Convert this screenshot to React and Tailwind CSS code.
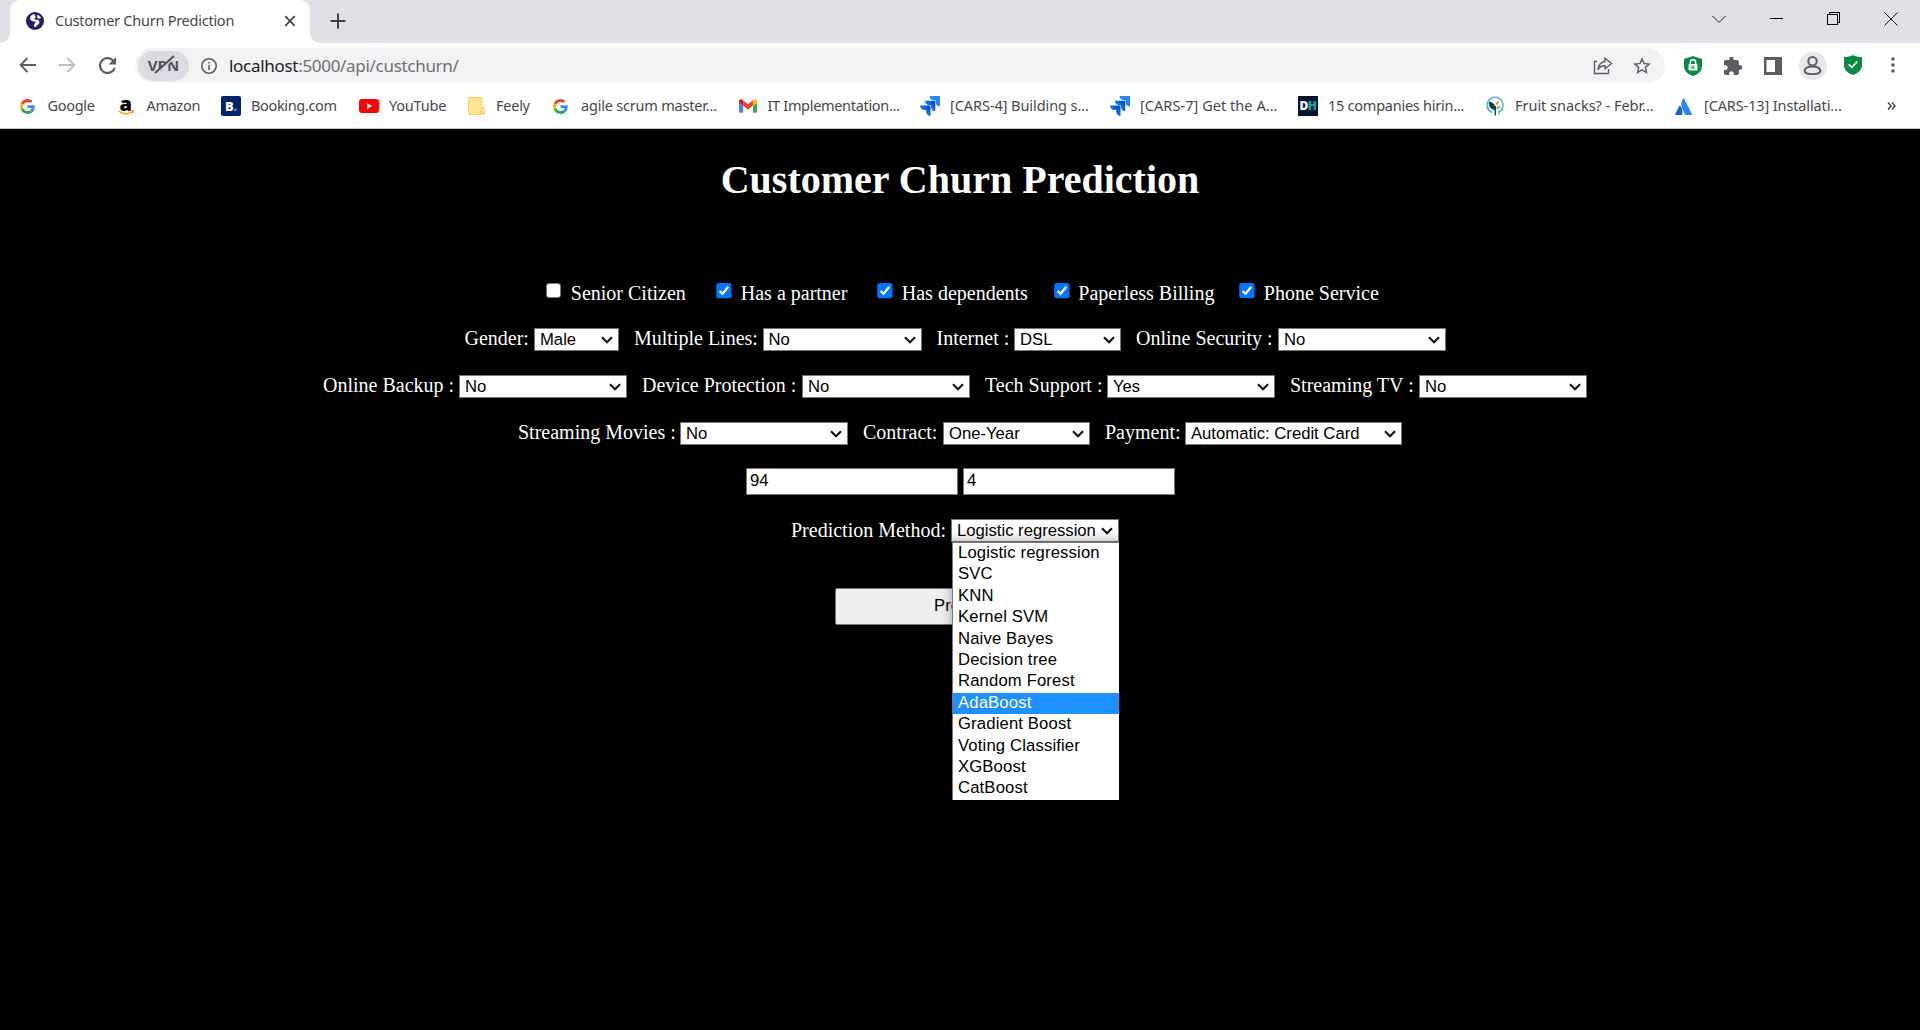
import React from 'react';

const G = () => (
  <svg viewBox="0 0 48 48" className="mt-px h-[15px] w-[15px]">
    <path fill="#EA4335" d="M24 9.5c3.54 0 6.71 1.22 9.21 3.6l6.85-6.85C35.9 2.38 30.47 0 24 0 14.62 0 6.51 5.38 2.56 13.22l7.98 6.19C12.43 13.72 17.74 9.5 24 9.5z" />
    <path fill="#4285F4" d="M46.98 24.55c0-1.57-.15-3.09-.38-4.55H24v9.02h12.94c-.58 2.96-2.26 5.48-4.78 7.18l7.73 6c4.51-4.18 7.09-10.36 7.09-17.65z" />
    <path fill="#FBBC05" d="M10.53 28.59c-.48-1.45-.76-2.99-.76-4.59s.27-3.14.76-4.59l-7.98-6.19C.92 16.46 0 20.12 0 24c0 3.88.92 7.54 2.56 10.78l7.97-6.19z" />
    <path fill="#34A853" d="M24 48c6.48 0 11.93-2.13 15.89-5.81l-7.73-6c-2.15 1.45-4.92 2.3-8.16 2.3-6.26 0-11.57-4.22-13.47-9.91l-7.98 6.19C6.51 42.62 14.62 48 24 48z" />
  </svg>
);

const Amazon = () => (
  <span className="-ml-px flex w-[17px] flex-col items-center">
    <span className="font-['Open_Sans',sans-serif] text-[20px] leading-[13px] font-extrabold text-black">a</span>
    <svg viewBox="0 0 16 5" className="h-[5px] w-4" fill="none" stroke="#ff9900" strokeWidth="1.5">
      <path d="M.5 1Q7.5 6 13.5 2M12 .8l3-.2-.8 2.6" />
    </svg>
  </span>
);

const Booking = () => (
  <span className="flex h-5 w-5 items-center justify-center rounded-[2px] bg-[#00246b] font-['Open_Sans',sans-serif] text-[13px] leading-none font-extrabold text-white">
    B<span className="text-[#27b5f8]">.</span>
  </span>
);

const YouTube = () => (
  <svg viewBox="0 0 20 14" className="h-[14px] w-5">
    <rect width="20" height="14" rx="3" fill="#f00" />
    <path d="M8 4l5.2 3L8 10z" fill="#fff" />
  </svg>
);

const Folder = () => (
  <svg viewBox="0 0 17 18" className="h-[18px] w-[17px]">
    <path d="M.5.5H14V11h2v6.5H.5z" fill="#ffe591" stroke="#f6d368" />
    <path d="M13.5 10.5H16v6.5h-4v-3h1.500z" fill="#ffe591" stroke="#f3c74d" strokeWidth=".8" />
  </svg>
);

const Gmail = () => (
  <svg viewBox="52 42 88 66" className="h-[14px] w-[18px]">
    <path fill="#4285f4" d="M58 108h14V74L52 59v43c0 3.320 2.690 6 6 6" />
    <path fill="#34a853" d="M120 108h14c3.320 0 6-2.690 6-6V59l-20 15" />
    <path fill="#fbbc04" d="M120 48v26l20-15v-8c0-7.420-8.470-11.650-14.400-7.200" />
    <path fill="#ea4335" d="M72 74V48l24 18 24-18v26L96 92" />
    <path fill="#c5221f" d="M52 51v8l20 15V48l-5.600-4.200c-5.940-4.450-14.400-.22-14.400 7.200" />
  </svg>
);

const Jira = () => (
  <svg viewBox="0 0 24 24" className="h-5 w-5">
    <defs>
      <linearGradient id="jiraShade" x1="1" y1="0" x2="0" y2="1">
        <stop offset=".2" stopColor="#0052cc" />
        <stop offset=".65" stopColor="#2684ff" />
      </linearGradient>
    </defs>
    <path fill="url(#jiraShade)" d="M11.571 11.513H0a5.218 5.218 0 0 0 5.232 5.215h2.130v2.057A5.215 5.215 0 0 0 12.575 24V12.518a1.005 1.005 0 0 0-1.005-1.005z" />
    <path fill="url(#jiraShade)" d="M17.294 5.757H5.736a5.215 5.215 0 0 0 5.215 5.214h2.129v2.058a5.218 5.218 0 0 0 5.215 5.214V6.758a1.001 1.001 0 0 0-1.001-1.001z" />
    <path fill="#2684ff" d="M23.013 0H11.455a5.215 5.215 0 0 0 5.215 5.215h2.129v2.057A5.215 5.215 0 0 0 24 12.483V1.005A1.001 1.001 0 0 0 23.013 0z" />
  </svg>
);

const DH = () => (
  <span className="flex h-5 w-5 items-center justify-center bg-[#04152d] font-['Open_Sans',sans-serif] text-[12px] leading-none font-extrabold tracking-[-0.5px] text-white">
    D<span className="text-[#14a5ab]">H</span>
  </span>
);

const Leaf = () => (
  <svg viewBox="0 0 18 20" className="h-5 w-[18px]">
    <path d="M6 16.500A8 8 0 1 1 12 16.500" fill="none" stroke="#3fb1cf" strokeWidth="1.400" />
    <path d="M3 6c4 0 6.500 3 6 7.500C5 13.500 3 11 3 6z" fill="#0b4650" stroke="#0b4650" strokeWidth=".6" />
    <path d="M10 9c-.5-2 .5-3.500 2.500-4C13 7 12 8.500 10 9z" fill="#f2836b" stroke="#f2836b" strokeWidth=".6" />
    <path d="M10 13c.5-2.500 2.500-3.500 5-3-.8 2.500-2.500 3.500-5 3z" fill="#8bc53f" />
    <path d="M9.300 10v9.500" stroke="#0b4650" strokeWidth="1.400" />
    <circle cx="13" cy="18" r=".8" fill="#3fb1cf" />
  </svg>
);

const Atlassian = () => (
  <svg viewBox="0 0 24 24" className="h-[17px] w-[17px]">
    <path fill="#0f62d8" d="M7.120 11.084a.683.683 0 0 0-1.160.126L.075 22.974a.703.703 0 0 0 .630 1.018h8.190a.678.678 0 0 0 .630-.390c1.767-3.650.696-9.203-2.406-12.520z" />
    <path fill="#2684ff" d="M11.434.386a15.515 15.515 0 0 0-.906 15.317l3.950 7.900a.703.703 0 0 0 .628.388h8.190a.703.703 0 0 0 .630-1.017L12.630.380a.664.664 0 0 0-1.196.006z" />
  </svg>
);

const bookmarks = [
  { icon: G, label: 'Google', box: 'w-[98px] tracking-[-0.300px]', gap: 'w-[27.500px]' },
  { icon: Amazon, label: 'Amazon', box: 'w-[103px] tracking-[-0.300px]', gap: 'w-[28.500px]' },
  { icon: Booking, label: 'Booking.com', box: 'w-[138px] tracking-[-0.350px]', gap: 'w-[30px]' },
  { icon: YouTube, label: 'YouTube', box: 'w-[109px] tracking-[-0.200px]', gap: 'w-[30px]' },
  { icon: Folder, label: 'Feely', box: 'w-[85px] tracking-[-0.250px]', gap: 'w-[28px]' },
  { icon: G, label: 'agile scrum master...', box: 'w-[186px] tracking-[-0.200px]', gap: 'w-[28px]' },
  { icon: Gmail, label: 'IT Implementation...', box: 'w-[181px] tracking-[-0.320px]', gap: 'w-[28.500px]' },
  { icon: Jira, label: '[CARS-4] Building s...', box: 'w-[190px] tracking-[-0.070px]', gap: 'w-[30px]' },
  { icon: Jira, label: '[CARS-7] Get the A...', box: 'w-[188px] tracking-[0.050px]', gap: 'w-[30px]' },
  { icon: DH, label: '15 companies hirin...', box: 'w-[188px] tracking-[-0.250px]', gap: 'w-[30px]' },
  { icon: Leaf, label: 'Fruit snacks? - Febr...', box: 'w-[189px] tracking-[-0.030px]', gap: 'w-[29px]' },
  { icon: Atlassian, label: '[CARS-13] Installati...', box: 'w-[212px] tracking-[-0.120px]', gap: 'w-[29px]' },
];

function TabStrip() {
  return (
    <div className="flex h-[43px] bg-[#dee1e6]">
      <div className="flex w-[10px] items-end bg-white">
        <div className="h-full w-full rounded-br-[10px] bg-[#dee1e6]" />
      </div>
      <div className="h-full w-[300px] bg-[#dee1e6]">
        <div className="flex h-full items-center rounded-t-[10px] bg-white pb-px pl-4">
          <svg viewBox="0 0 18 18" className="h-[18px] w-[18px]">
            <circle cx="9" cy="9" r="9" fill="#271b67" />
            <path d="M8.500 2.600C6 2.600 4 4.500 4.300 6.700c.2 1.800 2 2.300 4.200 2.600 2 .3 1.600 1.300.6 2-1.200.8-1 2.300-.2 3.700l1.100-.5c.4-1.600 3-2 3.200-4.300.1-1.900-1.600-2.400-3.400-2.500-2-.1-2.400-1-1-1.700 1-.5.500-1.500-.3-3.400z" fill="#fff" stroke="#fff" strokeWidth=".5" />
            <path d="M11.500 2.500l3.600 3-2.200 1.500-1.900-1.500z" fill="#fff" />
          </svg>
          <span className="ml-[11px] w-[216px] whitespace-nowrap text-[14.500px] tracking-[-0.250px] text-[#45484d]">Customer Churn Prediction</span>
          <svg viewBox="0 0 12 12" className="ml-[13px] h-3 w-3" stroke="#3c4043" strokeWidth="1.700"><path d="M1.200 1.200l9.600 9.600M10.800 1.200L1.200 10.800" /></svg>
        </div>
      </div>
      <div className="w-[10px] bg-white"><div className="h-full w-full rounded-bl-[10px] bg-[#dee1e6]" /></div>
      <svg viewBox="0 0 16 16" className="mt-[13px] ml-[10px] h-4 w-4" stroke="#3c4043" strokeWidth="2"><path d="M8 .5v15M.5 8h15" /></svg>
      <div className="ml-auto flex h-[37px] items-center pr-[22px]">
        <svg viewBox="0 0 14 14" className="mr-[43px] h-[14px] w-[14px]" fill="none" stroke="#222"><path d="M.5 4l6.500 6.500L13.500 4" /></svg>
        <svg viewBox="0 0 14 14" className="mr-[43px] h-[14px] w-[14px]" stroke="#000" shapeRendering="crispEdges"><path d="M.5 6.500h13" /></svg>
        <svg viewBox="0 0 14 14" className="mr-[44px] h-[14px] w-[14px]" fill="none" stroke="#000" shapeRendering="crispEdges"><path d="M1.500 2.500h10v10h-10zM3.500 2V.5h10v10H12" /></svg>
        <svg viewBox="0 0 14 14" className="h-[14px] w-[14px]" fill="none" stroke="#111"><path d="M.5.5l13 13M13.500.5l-13 13" /></svg>
      </div>
    </div>
  );
}

function Toolbar() {
  return (
    <div className="flex h-[45px] items-center bg-white pl-[19px]">
      <svg viewBox="0 0 18 16" className="-mt-px h-4 w-[18px]" fill="none" stroke="#5a5e62" strokeWidth="1.800"><path d="M17 8H2M8.500 1l-7 7 7 7" /></svg>
      <svg viewBox="0 0 18 16" className="-mt-px ml-[21px] h-4 w-[18px]" fill="none" stroke="#bbbdc0" strokeWidth="1.800"><path d="M1 8h15M9.500 1l7 7-7 7" /></svg>
      <svg viewBox="4 4 16 16" className="-mt-px ml-[23px] h-[17px] w-[17px]" fill="#5a5e62"><path d="M17.650 6.350A7.958 7.958 0 0 0 12 4a8 8 0 1 0 7.730 10h-2.080A6 6 0 1 1 12 6c1.660 0 3.140.69 4.220 1.780L13 11h7V4l-2.350 2.350z" /></svg>
      <div className="ml-[19px] flex h-[35px] w-[1530px] items-center rounded-full bg-[#f1f3f4] pl-[3px]">
        <div className="relative flex h-[30px] w-[51px] items-center justify-center rounded-full bg-[#dadce0] font-['Open_Sans',sans-serif] text-[15px] font-bold text-[#505458]">
          VPN
          <svg viewBox="0 0 24 20" className="absolute top-[4px] left-[14px] h-5 w-6" fill="none"><path d="M4 18.500L23 2" stroke="#dadce0" strokeWidth="2" /><path d="M3 18L22 1" stroke="#505458" strokeWidth="2" /></svg>
        </div>
        <svg viewBox="0 0 16 16" className="ml-3 h-4 w-4" fill="none" stroke="#5a5e62" strokeWidth="1.600"><circle cx="8" cy="8" r="7.200" /><path d="M8 7v5M8 4v1.600" /></svg>
        <span className="ml-[12px] w-[360px] whitespace-nowrap text-[17px] tracking-[-0.300px] text-[#6a6e73]"><span className="text-[#202124]">localhost</span>:5000/api/custchurn/</span>
        <svg viewBox="0 0 20 18" className="mr-px ml-auto h-[18px] w-5" fill="none" stroke="#5a5e62" strokeWidth="1.400"><path d="M4 4.500H1.500v12h14V12" /><path d="M12 1.200l6.500 5.300-6.500 5.300V8.700C8.500 8.600 6.500 10 5 12.800 5.500 8 8 5 12 4.500z" /></svg>
        <svg viewBox="2 2 20 19" className="mr-[14px] ml-[19px] h-[17px] w-[18px]" fill="#5a5e62"><path d="M22 9.240l-7.190-.62L12 2 9.190 8.630 2 9.240l5.460 4.730L5.820 21 12 17.270 18.180 21l-1.630-7.030L22 9.240zM12 15.400l-3.760 2.270 1-4.280-3.320-2.880 4.380-.38L12 6.100l1.710 4.040 4.380.38-3.320 2.880 1 4.280L12 15.400z" /></svg>
      </div>
      <svg viewBox="0 0 18 20" className="ml-[18.500px] h-5 w-[18px]">
        <path d="M9 0l9 3v7c0 5-4 8.500-9 10-5-1.500-9-5-9-10V3z" fill="#0a8a45" />
        <rect x="4.500" y="8" width="9" height="6.500" rx="1" fill="#fff" /><path d="M6.300 8V6.500a2.700 2.700 0 0 1 5.400 0V8" fill="none" stroke="#fff" strokeWidth="1.400" /><path d="M9 9.500v3.500M7 11.300h.8M10.200 11.300h.8" stroke="#0a8a45" strokeWidth="1.200" />
      </svg>
      <svg viewBox="2 1.500 20.500 20.500" className="ml-[22px] h-[18px] w-[18px]" fill="#5a5e62"><path d="M20.500 11H19V7c0-1.100-.9-2-2-2h-4V3.500a2.500 2.500 0 0 0-5 0V5H4c-1.100 0-1.990.9-1.990 2v3.800H3.500c1.490 0 2.700 1.210 2.700 2.700s-1.210 2.700-2.700 2.700H2V20c0 1.100.9 2 2 2h3.800v-1.500c0-1.490 1.210-2.700 2.700-2.700 1.490 0 2.700 1.210 2.700 2.700V22H17c1.100 0 2-.9 2-2v-4h1.500a2.500 2.500 0 0 0 0-5z" /></svg>
      <svg viewBox="0 0 18 18" className="ml-[22px] h-[18px] w-[18px]"><path fill="#5a5e62" d="M0 0h18v18H0z" /><path fill="#fff" d="M2.500 3h8.500v12H2.500z" /></svg>
      <div className="ml-[17px] flex h-7 w-7 items-center justify-center rounded-full bg-[#e6e8ec]">
        <svg viewBox="0 0 18 18" className="-mt-px h-[19px] w-[19px]" fill="none" stroke="#5a5e62" strokeWidth="1.900"><circle cx="9" cy="5" r="4" /><path d="M1.500 14C2 11.500 5 10 9 10s7 1.500 7.500 4c0 2.200-3 3.200-7.500 3.200S1.500 16.200 1.500 14z" /></svg>
      </div>
      <svg viewBox="0 0 18 20" className="-mt-px ml-[17px] h-5 w-[18px]"><path d="M9 0c2.500 1.500 5 2 9 2v8c0 5-4 8.500-9 10-5-1.500-9-5-9-10V2c4 0 6.500-.5 9-2z" fill="#0a8a45" /><path d="M4.800 9.300l3 3 5.400-5.600" fill="none" stroke="#fff" strokeWidth="1.800" /></svg>
      <svg viewBox="0 0 4 16" className="-mt-px ml-[29px] h-4 w-1" fill="#5a5e62"><circle cx="2" cy="2" r="1.800" /><circle cx="2" cy="8" r="1.800" /><circle cx="2" cy="14" r="1.800" /></svg>
    </div>
  );
}

function BookmarksBar() {
  return (
    <div className="flex h-[41px] items-center border-b border-[#c5c7ca] bg-white pb-1 pl-5 text-[14.500px] text-[#45484d]">
      {bookmarks.map(({ icon: Icon, label, box, gap }) => (
        <div key={label} className={'flex shrink-0 items-center whitespace-nowrap ' + box}>
          <span className={'flex shrink-0 ' + gap}><Icon /></span>
          {label}
        </div>
      ))}
      <svg viewBox="0 0 9 8" className="h-2 w-[9px]" fill="none" stroke="#45484d" strokeWidth="1.500"><path d="M1 .5L4 4 1 7.500M5 .5L8 4 5 7.500" /></svg>
    </div>
  );
}

function Checkbox({ label, checked, width }) {
  return (
    <label className={'flex items-start ' + width}>
      {checked ? (
        <svg viewBox="0 0 16 16" className="mt-px h-4 w-4 shrink-0"><rect x=".2" y="0" width="15.300" height="15.300" rx="2.500" fill="#0075ff" /><path d="M3.600 8l2.900 2.900L12.200 3.800" fill="none" stroke="#fff" strokeWidth="2.300" /></svg>
      ) : (
        <span className="mt-px mr-px h-[15px] w-[15px] shrink-0 rounded-[3px] border border-[#767676] bg-white" />
      )}
      <span className="ml-[8.800px] leading-[23px] whitespace-nowrap">{label}</span>
    </label>
  );
}

function Chevron() {
  return <svg viewBox="0 0 12 8" className="mr-[5px] ml-auto h-2 w-3 shrink-0" fill="none" stroke="#111" strokeWidth="2.200"><path d="M1 1.300l5 5 5-5" /></svg>;
}

function Field({ label, value, labelWidth, width, open }) {
  return (
    <div className="flex h-[23px] items-start">
      <span className={'shrink-0 leading-[23px] whitespace-nowrap ' + (open ? '' : '-mt-px ') + labelWidth}>{label}</span>
      <div className={"flex h-[23px] shrink-0 items-center border border-[#767676] pl-[5px] font-['Liberation_Sans',Arial,sans-serif] text-[16.670px] leading-[20px] whitespace-nowrap text-black " + (open ? 'bg-linear-to-b from-white from-50% to-[#e4e4e4] ' : 'bg-white ') + width}>
        {value}
        <Chevron />
      </div>
    </div>
  );
}

const methods = ['Logistic regression', 'SVC', 'KNN', 'Kernel SVM', 'Naive Bayes', 'Decision tree', 'Random Forest', 'AdaBoost', 'Gradient Boost', 'Voting Classifier', 'XGBoost', 'CatBoost'];

export default function App() {
  return (
    <div className="flex h-[1030px] w-[1920px] flex-col overflow-hidden bg-black font-['Noto_Sans','Open_Sans',sans-serif]">
      <TabStrip />
      <Toolbar />
      <BookmarksBar />
      <main className="flex flex-col font-['Liberation_Serif','Times_New_Roman',serif] text-[20px] text-white">
        <h1 className="mt-[27px] text-center text-[40px] leading-[48px] font-bold">Customer Churn Prediction</h1>
        <div className="mt-[78px] flex h-[23px] pl-[546px]">
          <Checkbox label="Senior Citizen" width="w-[170px]" />
          <Checkbox label="Has a partner" checked width="w-[161px]" />
          <Checkbox label="Has dependents" checked width="w-[176.500px]" />
          <Checkbox label="Paperless Billing" checked width="w-[185.500px]" />
          <Checkbox label="Phone Service" checked width="w-[150px]" />
        </div>
        <div className="mt-[23px] flex gap-[15px] pl-[464.500px]">
          <Field label="Gender:" value="Male" labelWidth="w-[69.500px]" width="w-[85px]" />
          <Field label="Multiple Lines:" value="No" labelWidth="w-[128.500px]" width="w-[159px]" />
          <Field label="Internet :" value="DSL" labelWidth="w-[77.500px]" width="w-[107px]" />
          <Field label="Online Security :" value="No" labelWidth="w-[142px]" width="w-[168px]" />
        </div>
        <div className="mt-6 flex gap-[15px] pl-[323px]">
          <Field label="Online Backup :" value="No" labelWidth="w-[136px]" width="w-[168px]" />
          <Field label="Device Protection :" value="No" labelWidth="w-[160px]" width="w-[168px]" />
          <Field label="Tech Support :" value="Yes" labelWidth="w-[122px]" width="w-[168px]" />
          <Field label="Streaming TV :" value="No" labelWidth="w-[129px]" width="w-[168px]" />
        </div>
        <div className="mt-6 flex gap-[15px] pl-[518px]">
          <Field label="Streaming Movies :" value="No" labelWidth="w-[162px]" width="w-[168px]" />
          <Field label="Contract:" value="One-Year" labelWidth="w-[80px]" width="w-[147px]" />
          <Field label="Payment:" value="Automatic: Credit Card" labelWidth="w-[80px]" width="w-[217px]" />
        </div>
        <div className="mt-[23px] flex gap-[5px] pl-[746px] font-['Liberation_Sans',Arial,sans-serif] text-[16.670px] leading-[23px] text-black">
          <div className="h-[27px] w-[212px] border border-[#767676] bg-white pl-[3px]">94</div>
          <div className="h-[27px] w-[212px] border border-[#767676] bg-white pl-[3px]">4</div>
        </div>
        <div className="mt-6 flex pl-[791px]">
          <div className="relative">
            <Field label="Prediction Method:" value="Logistic regression" labelWidth="w-[160px]" width="w-[168px]" open />
            <div className="absolute top-[23px] left-[161px] z-10 h-[258px] w-[167px] border-t border-l border-[#767676] bg-white font-['Liberation_Sans',Arial,sans-serif] text-[16.670px] tracking-[0.150px] text-black shadow-[0_2px_10px_rgba(0,0,0,0.35)]">
              {methods.map((m) => (
                <div key={m} className={'h-[21.400px] pl-[5px] leading-[19px] whitespace-nowrap ' + (m === 'AdaBoost' ? 'bg-[#1e90ff] text-white' : '')}>{m}</div>
              ))}
            </div>
          </div>
        </div>
        <div className="mt-[46px] flex justify-center">
          <div className="h-[37px] w-[250px] rounded-[2px] border border-[#767676] bg-[#efefef] text-center font-['Liberation_Sans',Arial,sans-serif] text-[16.670px] leading-[33px] text-black">Predict</div>
        </div>
      </main>
    </div>
  );
}
